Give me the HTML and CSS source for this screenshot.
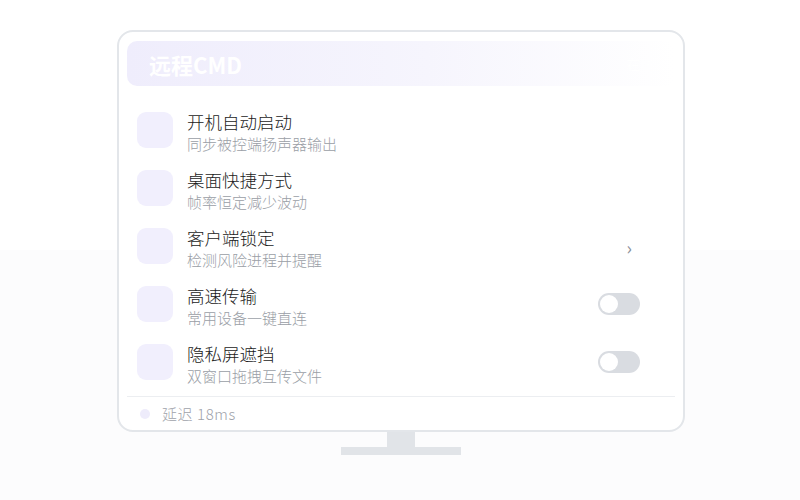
FILE: index.html
```html
<!DOCTYPE html>
<html lang="zh-CN">
<head>
  <meta charset="UTF-8" />
  <meta name="viewport" content="width=device-width, initial-scale=1.0"/>
  <title>远程CMD</title>
  <link rel="stylesheet" href="styles.css">
</head>
<body>
  <div class="monitor">
    <div class="screen">
      <div class="screen-head">
        <span class="head-title">远程CMD</span>
        <span class="head-right">在线</span>
      </div>

      <div class="list">
        <div class="row">
          <div class="icon"></div>
          <div class="text">
            <div class="title">开机自动启动</div>
            <div class="sub">同步被控端扬声器输出</div>
          </div>
        </div>
        <div class="row">
          <div class="icon"></div>
          <div class="text">
            <div class="title">桌面快捷方式</div>
            <div class="sub">帧率恒定减少波动</div>
          </div>
        </div>
        <div class="row">
          <div class="icon"></div>
          <div class="text">
            <div class="title">客户端锁定</div>
            <div class="sub">检测风险进程并提醒</div>
          </div>
          <span class="chevron">›</span>
        </div>
        <div class="row">
          <div class="icon"></div>
          <div class="text">
            <div class="title">高速传输</div>
            <div class="sub">常用设备一键直连</div>
          </div>
          <span class="toggle"></span>
        </div>
        <div class="row">
          <div class="icon"></div>
          <div class="text">
            <div class="title">隐私屏遮挡</div>
            <div class="sub">双窗口拖拽互传文件</div>
          </div>
          <span class="toggle"></span>
        </div>
      </div>

      <div class="status">
        <span class="dot"></span>
        <span class="latency">延迟 18ms</span>
      </div>
    </div>
    <div class="neck"></div>
    <div class="base"></div>
  </div>
</body>
</html>
```

FILE: styles.css
```css
body { margin: 0; height: 500px; font-family: "Noto Sans CJK SC", "Noto Sans", sans-serif; background: linear-gradient(#ffffff 0, #ffffff 50%, #fcfcfd 50%, #fcfcfd 100%); color: #2b2b2b; }
.monitor { width: 568px; margin: 0 auto; padding-top: 30px; display: flex; flex-direction: column; align-items: center; transform: translateX(1px); }
.screen { border: 2px solid #e3e6ea; border-radius: 16px; background: #fff; padding: 9px 8px 0; box-sizing: border-box; width: 568px; }
.screen-head { height: 45px; border-radius: 10px; background: linear-gradient(90deg, #efedfc 0%, #f6f5fd 55%, #ffffff 100%); display: flex; align-items: center; justify-content: space-between; padding: 0 22px; }
.head-title { color: #fff; font-size: 22px; font-weight: bold; }
.head-right { color: #fff; font-size: 13px; }
.list { padding: 26px 0 0 10px; display: flex; flex-direction: column; gap: 22px; }
.row { height: 36px; display: flex; align-items: flex-start; padding-right: 35px; }
.icon { width: 36px; height: 36px; border-radius: 9px; background: #f1effd; flex-shrink: 0; }
.text { margin-left: 14px; flex: 1; }
.title { font-size: 17.5px; line-height: 22px; font-weight: 300; color: #1a1a1a; margin-top: -1px; }
.sub { font-size: 15px; line-height: 20px; font-weight: 300; color: #9a9ea6; margin-top: 1px; }
.chevron { color: #8a8e97; font-size: 18px; line-height: 18px; margin-top: 10px; margin-right: 8px; }
.toggle { width: 42px; height: 22px; border-radius: 11px; background: #d9dce1; position: relative; margin-top: 7px; }
.toggle::after { content: ""; position: absolute; left: 2px; top: 2px; width: 18px; height: 18px; border-radius: 50%; background: #fff; }
.status { margin-top: 16px; border-top: 1px solid #eceef1; height: 33px; display: flex; align-items: center; padding-left: 13px; font-size: 15px; font-weight: 300; color: #9ea2aa; }
.latency { letter-spacing: 0.6px; }
.dot { width: 10px; height: 10px; border-radius: 50%; background: #eeecfb; margin-right: 12px; }
.neck { width: 28px; height: 15px; background: #e1e4e8; }
.base { width: 120px; height: 8px; background: #e1e4e8; }
```
